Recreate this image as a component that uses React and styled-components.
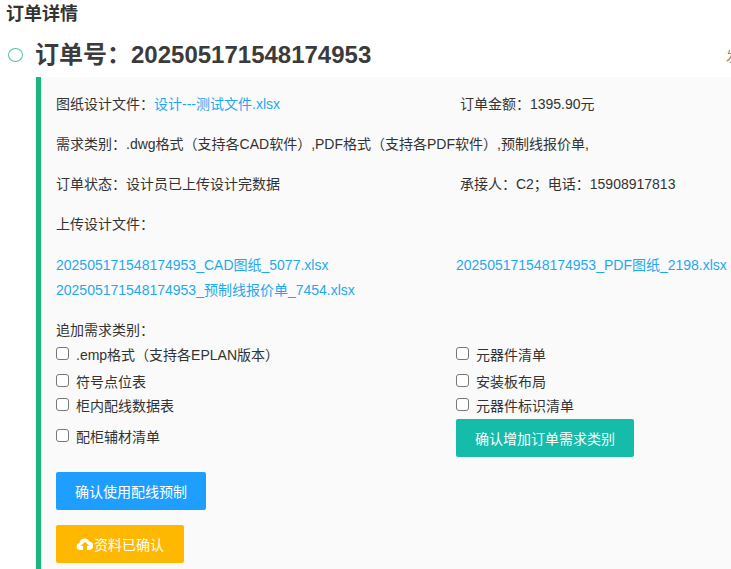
import React from "react";
import styled, { createGlobalStyle } from "styled-components";

const GlobalStyle = createGlobalStyle`
  html, body {
    margin: 0;
    padding: 0;
    height: 100%;
    overflow: hidden;
    background: #fff;
  }
  body {
    font-family: "Liberation Sans", "Noto Sans CJK SC", sans-serif;
    font-size: 14px;
    color: #333;
  }
`;

const Page = styled.div`
  width: 731px;
  height: 569px;
  overflow: hidden;
  padding: 4px 0 0 6px;
  box-sizing: border-box;
`;

const Heading = styled.h3`
  margin: 0;
  font-size: 18px;
  line-height: 20px;
  font-weight: 700;
  color: #333;
`;

const OrderHead = styled.div`
  display: flex;
  align-items: center;
  height: 36px;
  margin-top: 13px;
  width: 740px;
`;

const Dot = styled.span`
  width: 13px;
  height: 12px;
  border: 1px solid #55c2a2;
  border-radius: 50%;
  margin-left: 2px;
  flex: none;
`;

const OrderNo = styled.h2`
  margin: 0 0 0 12px;
  font-size: 24px;
  line-height: 36px;
  font-weight: 700;
  color: #3b3b3b;
  flex: 1;
`;

const Corner = styled.span`
  font-size: 14px;
  color: #a8866e;
  margin-right: 6px;
`;

const Panel = styled.div`
  margin: 4px 0 0 30px;
  width: 720px;
  height: 500px;
  background: #fafafa;
  border-left: 5px solid #19b77b;
  padding: 7px 0 0 15px;
`;

const Row = styled.div`
  display: flex;
  height: 40px;
  line-height: 40px;
  white-space: nowrap;
`;

const Col = styled.div`
  width: 400px;
  flex: none;
`;

const Link = styled.a`
  color: #1fa8f0;
  text-decoration: none;
`;

const Files = styled.div`
  margin-top: 9px;
  line-height: 25px;
  white-space: nowrap;
`;

const FileRow = styled.div`
  display: flex;
  height: 25px;
`;

const Options = styled.div`
  margin-top: 17px;
`;

const OptionsTitle = styled.div`
  line-height: 20px;
`;

const OptionGrid = styled.div`
  display: grid;
  grid-template-columns: 400px 300px;
  grid-template-rows: 27px 24px 27px 38px;
  margin-top: 1px;
`;

const Option = styled.label`
  display: flex;
  align-items: center;
  height: 25px;
  align-self: start;
  white-space: nowrap;
  margin-top: ${({ $drop }) => ($drop ? 4 : 0)}px;
`;

const Box = styled.span`
  width: 11px;
  height: 11px;
  border: 1px solid #777;
  border-radius: 3px;
  background: #fff;
  margin-right: 7px;
  flex: none;
`;

const Button = styled.button`
  display: flex;
  align-items: center;
  justify-content: center;
  height: 38px;
  width: ${({ $w }) => $w}px;
  padding: 0;
  border: none;
  border-radius: 2px;
  background: ${({ $bg }) => $bg};
  color: #fff;
  font: inherit;
`;

const Actions = styled.div`
  display: flex;
  flex-direction: column;
  gap: 15px;
  margin-top: 15px;
`;

const CloudIcon = () => (
  <svg width="18" height="14" viewBox="0 0 18 14" fill="#fff">
    <path d="M4 13a3.6 3.6 0 0 1-.6-7.1A5.2 5.2 0 0 1 13.3 4.6 4.3 4.3 0 0 1 14 13h-3V9h2.2L9 4.8 4.8 9H7v4z" />
  </svg>
);

const left = [".emp格式（支持各EPLAN版本）", "符号点位表", "柜内配线数据表", "配柜辅材清单"];
const right = ["元器件清单", "安装板布局", "元器件标识清单"];

const App = () => {
  return (
    <Page>
      <GlobalStyle />
      <Heading>订单详情</Heading>
      <OrderHead>
        <Dot />
        <OrderNo>订单号：202505171548174953</OrderNo>
        <Corner>发</Corner>
      </OrderHead>
      <Panel>
        <Row>
          <Col>
            图纸设计文件：<Link>设计---测试文件.xlsx</Link>
          </Col>
          <Col>&nbsp;订单金额：1395.90元</Col>
        </Row>
        <Row>需求类别：.dwg格式（支持各CAD软件）,PDF格式（支持各PDF软件）,预制线报价单,</Row>
        <Row>
          <Col>订单状态：设计员已上传设计完数据</Col>
          <Col>&nbsp;承接人：C2；电话：15908917813</Col>
        </Row>
        <Row>上传设计文件：</Row>
        <Files>
          <FileRow>
            <Col>
              <Link>202505171548174953_CAD图纸_5077.xlsx</Link>
            </Col>
            <Col>
              <Link>202505171548174953_PDF图纸_2198.xlsx</Link>
            </Col>
          </FileRow>
          <FileRow>
            <Link>202505171548174953_预制线报价单_7454.xlsx</Link>
          </FileRow>
        </Files>
        <Options>
          <OptionsTitle>追加需求类别：</OptionsTitle>
          <OptionGrid>
            {left.map((text, i) => (
              <React.Fragment key={text}>
                <Option $drop={!right[i]}>
                  <Box />
                  {text}
                </Option>
                {right[i] ? (
                  <Option>
                    <Box />
                    {right[i]}
                  </Option>
                ) : (
                  <Button $w={178} $bg="#16bcaa">确认增加订单需求类别</Button>
                )}
              </React.Fragment>
            ))}
          </OptionGrid>
        </Options>
        <Actions>
          <Button $w={150} $bg="#1e9fff">确认使用配线预制</Button>
          <Button $w={128} $bg="#ffb800">
            <CloudIcon />
            资料已确认
          </Button>
        </Actions>
      </Panel>
    </Page>
  );
};

export default App;
